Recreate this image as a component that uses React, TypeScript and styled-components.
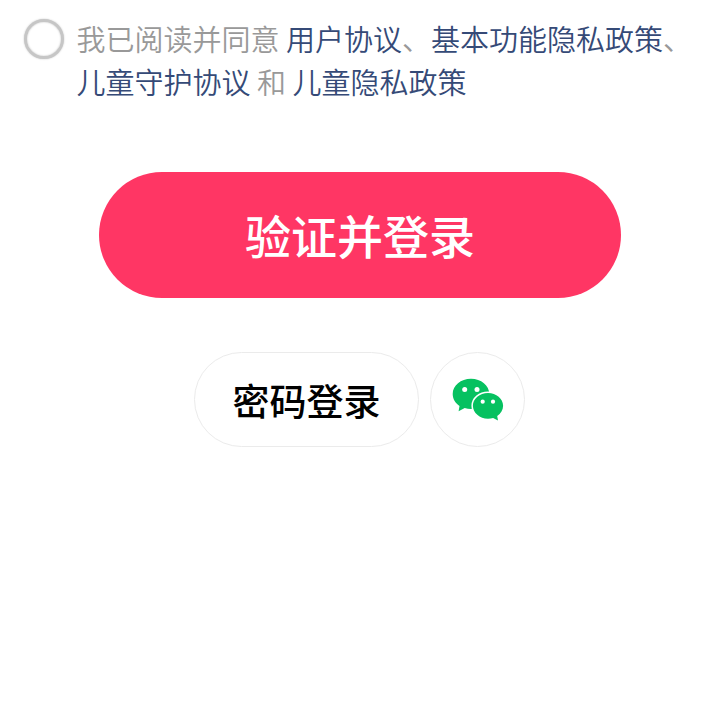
import React from 'react';
import styled, { createGlobalStyle } from 'styled-components';

const Global = createGlobalStyle`
  *, *::before, *::after { box-sizing: border-box; }
  html, body { margin: 0; background: #fff; }
  body { font-family: "Noto Sans CJK SC", sans-serif; }
  button { font-family: inherit; padding: 0; cursor: pointer; }
`;

const Page = styled.main`
  display: flex;
  flex-direction: column;
  align-items: center;
  height: 720px;
  padding-top: 17px;
  background: #fff;
  overflow: hidden;
`;

const Agreement = styled.div`
  display: flex;
  width: 100%;
  height: 86px;
  padding-left: 24px;
`;

const Radio = styled.button`
  flex: none;
  width: 40px;
  height: 40px;
  margin-top: 2px;
  border: 3px solid #c6c6c6;
  border-radius: 50%;
  background: #fff;
  box-shadow: 0 0 2px #c6c6c6, inset 0 0 2px #c6c6c6;
`;

const Terms = styled.p`
  margin: 0 0 0 12.5px;
  color: #999;
  font-size: 29px;
  font-weight: 350;
  line-height: 43px;
  white-space: nowrap;
`;

const Link = styled.a`
  color: #354a77;
`;

const Submit = styled.button`
  width: 522px;
  height: 126px;
  margin-top: 69px;
  padding-bottom: 3px;
  border: 0;
  border-radius: 63px;
  background: #ff3664;
  color: #fff;
  font-size: 46px;
  font-weight: 500;
`;

const Alternatives = styled.div`
  display: flex;
  gap: 11px;
  margin: 54px 1px 0 0;
`;

const Outlined = styled.button<{ $width: number }>`
  display: flex;
  align-items: center;
  justify-content: center;
  width: ${(p) => p.$width}px;
  height: 95px;
  border: 1px solid #ebebeb;
  border-radius: 48px;
  background: #fff;
  color: #000;
  font-size: 37px;
  font-weight: 500;
`;

const WeChat = () => (
  <svg width="53" height="45" viewBox="0 0 53 45" aria-label="微信">
    <path
      fill="#06c160"
      d="M20 1.8C9.800 1.800 1.700 8.500 1.700 17c0 4.800 2.600 9.100 6.800 11.900L7.600 34.300l6.100-3.200c2 .6 4.100.9 6.300.9 10.100 0 18.300-6.700 18.300-15S30.100 1.800 20 1.800Z"
    />
    <path
      fill="#06c160"
      stroke="#fff"
      strokeWidth="3"
      paintOrder="stroke"
      d="M37 16c-8.300 0-15.100 5.700-15.100 12.800S28.700 41.700 37 41.700c1.800 0 3.500-.3 5.100-.8l4.900 2.600-.8-4.500c3.600-2.400 5.900-6 5.900-10.200C52.100 21.700 45.300 16 37 16Z"
    />
    <g fill="#fff">
      <circle cx="13.700" cy="12.400" r="2.500" />
      <circle cx="26" cy="12.400" r="2.500" />
      <circle cx="31.700" cy="24.700" r="2.100" />
      <circle cx="42" cy="24.700" r="2.100" />
    </g>
  </svg>
);

export default function App() {
  return (
    <>
      <Global />
      <Page>
        <Agreement>
          <Radio role="radio" aria-checked="false" />
          <Terms>
            我已阅读并同意 <Link>用户协议</Link>、<Link>基本功能隐私政策</Link>、
            <br />
            <Link>儿童守护协议</Link> 和 <Link>儿童隐私政策</Link>
          </Terms>
        </Agreement>
        <Submit>验证并登录</Submit>
        <Alternatives>
          <Outlined $width={225}>密码登录</Outlined>
          <Outlined $width={95}><WeChat /></Outlined>
        </Alternatives>
      </Page>
    </>
  );
}
